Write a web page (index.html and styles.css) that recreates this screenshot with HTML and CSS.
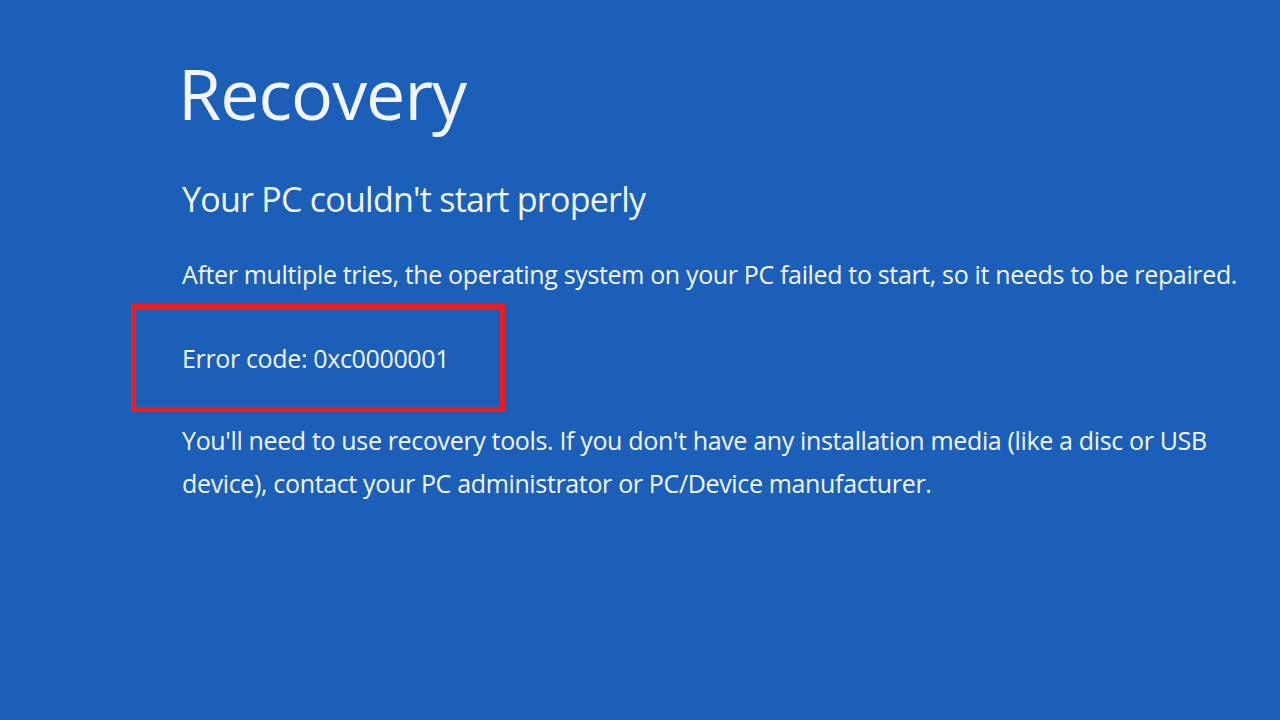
FILE: index.html
```html
<!DOCTYPE html>
<html lang="en">
<head>
  <meta charset="UTF-8">
  <meta name="viewport" content="width=device-width, initial-scale=1.0">
  <title>Recovery</title>
  <link rel="stylesheet" href="styles.css">
</head>
<body>

  <div class="screen">
    <h1 class="title">Recovery</h1>
    <h2 class="subtitle">Your PC couldn't start properly</h2>
    <p class="text">After multiple tries, the operating system on your PC failed to start, so it needs to be repaired.</p>
    <div class="error-box">
      <p class="text">Error code: 0xc0000001</p>
    </div>
    <p class="text tools">You'll need to use recovery tools. If you don't have any installation media (like a disc or USB device), contact your PC administrator or PC/Device manufacturer.</p>
  </div>

</body>
</html>
```

FILE: styles.css
```css
html, body{
  margin: 0;
  padding: 0;
  height: 100%;
}
body{
  background-color: #1b5fb8;
  color: #f2f6fc;
  font-family: "Open Sans", "Noto Sans", sans-serif;
}
.screen{
  padding: 48px 0 0 182px;
}
.title{
  margin: 0 0 0 -4px;
  font-size: 70px;
  font-weight: 400;
  line-height: 90px;
  letter-spacing: -1px;
}
.subtitle{
  margin: 39px 0 0 0;
  font-size: 34px;
  font-weight: 400;
  line-height: 44px;
  letter-spacing: -0.75px;
}
.text{
  margin: 0;
  font-size: 25px;
  line-height: 42px;
  letter-spacing: -0.35px;
}
.subtitle + .text{
  margin-top: 32px;
}
.error-box{
  width: 318px;
  height: 98px;
  margin: 9px 0 0 -51px;
  padding-left: 46px;
  display: flex;
  align-items: center;
  border: 5px solid #ee1c1c;
}
.tools{
  width: 1045px;
  margin-top: 7px;
  line-height: 43px;
}
```
